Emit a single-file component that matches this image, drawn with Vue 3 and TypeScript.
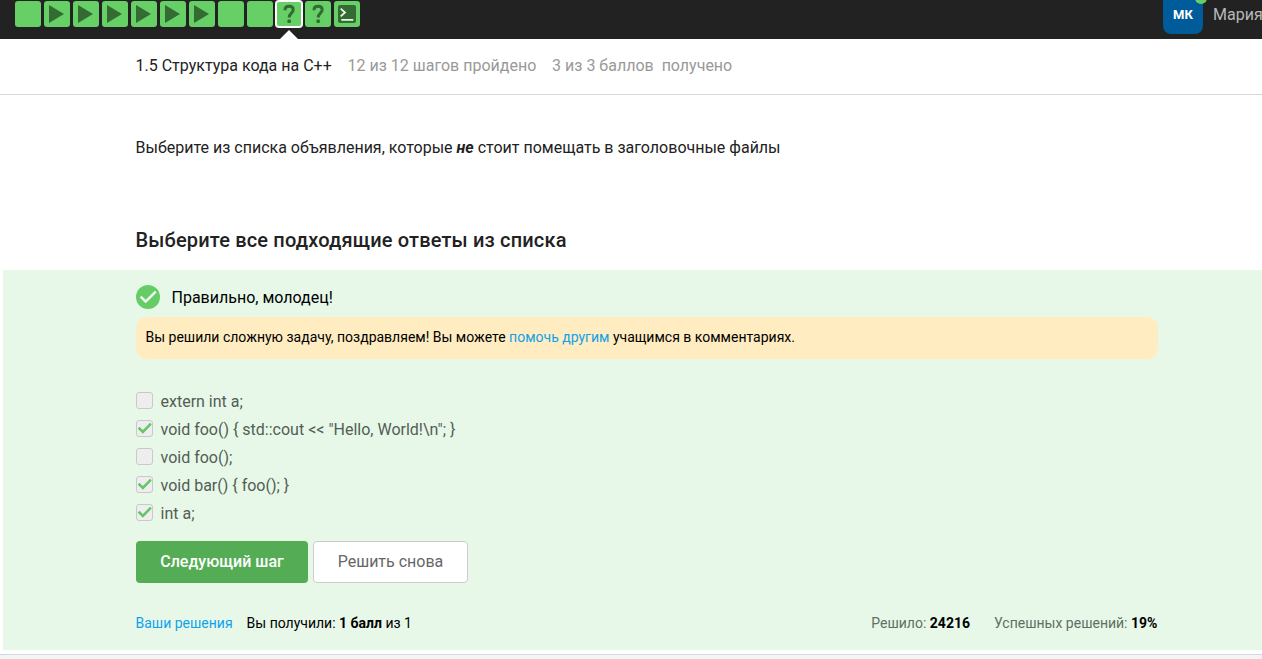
<script setup lang="ts">
type StepKind = 'text' | 'video' | 'quiz' | 'code'

interface Step {
  kind: StepKind
  active?: boolean
}

interface Choice {
  label: string
  checked: boolean
}

const steps: Step[] = [
  { kind: 'text' },
  { kind: 'video' },
  { kind: 'video' },
  { kind: 'video' },
  { kind: 'video' },
  { kind: 'video' },
  { kind: 'video' },
  { kind: 'text' },
  { kind: 'text' },
  { kind: 'quiz', active: true },
  { kind: 'quiz' },
  { kind: 'code' },
]

const choices: Choice[] = [
  { label: 'extern int a;', checked: false },
  { label: 'void foo() { std::cout << "Hello, World!\\n"; }', checked: true },
  { label: 'void foo();', checked: false },
  { label: 'void bar() { foo(); }', checked: true },
  { label: 'int a;', checked: true },
]
</script>

<template>
  <div class="page">
    <header class="topbar">
      <nav class="steps">
        <div v-for="(step, i) in steps" :key="i" class="step" :class="{ active: step.active }">
          <svg v-if="step.kind === 'video'" viewBox="0 0 26 26" width="26" height="26">
            <path d="M5 4v18l15-9z" fill="#336b33" />
          </svg>
          <svg v-else-if="step.kind === 'quiz'" viewBox="0 0 26 26" width="26" height="26">
            <path d="M9 9.2C9 6.6 10.6 5.3 13.1 5.3c2.6 0 4.1 1.4 4.1 3.5 0 3.2-4 3.5-4 7.6" fill="none" stroke="#336b33" stroke-width="3" />
            <circle cx="13.2" cy="20.2" r="1.9" fill="#336b33" />
          </svg>
          <svg v-else-if="step.kind === 'code'" viewBox="0 0 26 26" width="26" height="26">
            <rect x="4" y="4" width="18" height="18" rx="2" fill="#336b33" />
            <path d="M6.7 7.6l4.3 3.9-4.3 3.9M7.3 18.8h12" fill="none" stroke="#e8f7e8" stroke-width="1.8" />
          </svg>
        </div>
      </nav>
      <div class="user">
        <div class="avatar">МК<span class="status"></span></div>
        <span class="name">Мария</span>
      </div>
    </header>

    <div class="lesson">
      <span class="title">1.5 Структура кода на C++</span>
      <span class="progress">12 из 12 шагов пройдено</span>
      <span class="progress">3 из 3 баллов&nbsp; получено</span>
    </div>

    <main>
      <p class="question">Выберите из списка объявления, которые <b><i>не</i></b> стоит помещать в заголовочные файлы</p>
      <h2>Выберите все подходящие ответы из списка</h2>
      <section class="attempt">
        <div class="result">
          <svg viewBox="0 0 24 24" width="24" height="24">
            <circle cx="12" cy="12" r="12" fill="#66cc66" />
            <path d="M4.7 11.7l5 4.9L19.7 6.7" fill="none" stroke="#f1fbf1" stroke-width="2.5" />
          </svg>
          <span>Правильно, молодец!</span>
        </div>
        <div class="hint">Вы решили сложную задачу, поздравляем! Вы можете <a>помочь другим</a> учащимся в комментариях.</div>
        <ul class="choices">
          <li v-for="choice in choices" :key="choice.label">
            <span class="box">
              <svg v-if="choice.checked" viewBox="0 0 15 15" width="15" height="15">
                <path d="M1.6 6.8l4.3 4.1 8-8.2" fill="none" stroke="#66c566" stroke-width="2.6" />
              </svg>
            </span>
            <span class="label">{{ choice.label }}</span>
          </li>
        </ul>
        <div class="actions">
          <button class="next">Следующий шаг</button>
          <button class="again">Решить снова</button>
        </div>
        <div class="stats">
          <a>Ваши решения</a>
          <span class="score">Вы получили: <b>1 балл</b> из 1</span>
          <span class="solved">Решило: <b>24216</b></span>
          <span class="rate">Успешных решений: <b>19%</b></span>
        </div>
      </section>
    </main>
    <footer></footer>
  </div>
</template>

<style>
body {
  margin: 0;
  overflow: hidden;
}
</style>

<style scoped>
.page {
  height: 659px;
  overflow: hidden;
  display: flex;
  flex-direction: column;
  box-sizing: border-box;
  background: #fff;
  color: #222;
  font: 16px/24px Roboto, sans-serif;
}
.topbar {
  height: 39px;
  flex: none;
  display: flex;
  justify-content: space-between;
  background: #222;
}
.steps {
  display: flex;
  gap: 3px;
  padding: 1px 0 0 15px;
}
.step {
  position: relative;
  width: 26px;
  height: 26px;
  border-radius: 3px;
  background: #66cf66;
}
.step svg,
.result svg,
.box svg {
  display: block;
}
.step.active {
  box-shadow: 0 0 0 1px #fff, inset 0 0 0 1px #fff;
}
.step.active::after {
  content: '';
  position: absolute;
  left: 4px;
  top: 29px;
  border: 9px solid transparent;
  border-top: 0;
  border-bottom-color: #fff;
}
.user {
  display: flex;
  width: 99px;
}
.avatar {
  position: relative;
  flex: none;
  width: 40px;
  height: 34px;
  border-radius: 0 0 8px 8px;
  background: #005b9a;
  color: #fff;
  font-size: 13px;
  font-weight: 700;
  line-height: 29px;
  text-align: center;
}
.status {
  position: absolute;
  right: -4px;
  top: -8px;
  width: 12px;
  height: 12px;
  border-radius: 50%;
  background: #66cc66;
}
.name {
  margin-left: 10px;
  line-height: 29px;
  color: #b8b8b8;
}
.lesson {
  flex: none;
  display: flex;
  gap: 15.8px;
  height: 55px;
  padding-left: 135.5px;
  border-bottom: 1px solid #d9d9d9;
  line-height: 53px;
}
.progress {
  color: #999;
}
main {
  flex: none;
}
.question {
  margin: 41px 0 0 135.5px;
}
h2 {
  margin: 66px 0 15px 135.5px;
  font-size: 20px;
  line-height: 29px;
  font-weight: 500;
  letter-spacing: 0.16px;
}
.attempt {
  box-sizing: border-box;
  height: 380px;
  margin-left: 3px;
  padding: 15px 104px 0 133px;
  background: #e7f8e9;
}
.result {
  display: flex;
  gap: 11.5px;
  color: #000;
}
.result span {
  line-height: 26px;
  height: 24px;
}
.hint {
  height: 42px;
  margin-top: 8px;
  padding-left: 9.5px;
  border-radius: 10px;
  background: #ffecc0;
  color: #000;
  font-size: 14px;
  line-height: 41px;
}
a {
  color: #0fa2ea;
}
.choices {
  margin: 28px 0 0;
  padding: 0;
  list-style: none;
}
.choices li {
  display: flex;
  align-items: center;
  gap: 7.5px;
  height: 28px;
  color: #535d54;
}
.label {
  line-height: 26px;
  padding-top: 2px;
}
.box {
  box-sizing: border-box;
  width: 17px;
  height: 17px;
  margin-top: -1px;
  border: 1px solid #c9c9c9;
  border-radius: 3px;
  background: #eee;
}
.actions {
  display: flex;
  gap: 5px;
  margin-top: 14px;
}
button {
  box-sizing: border-box;
  height: 42px;
  padding: 0;
  border: 0;
  border-radius: 4px;
  font: 16px/40px Roboto, sans-serif;
}
.next {
  width: 172px;
  background: #54ad54;
  color: #fff;
  font-weight: 500;
}
.again {
  width: 155px;
  border: 1px solid #ccc;
  background: #fff;
  color: #666;
}
.stats {
  display: flex;
  margin: 28px 0.6px 0 -0.5px;
  font-size: 14px;
}
.stats b {
  color: #000;
  font-weight: 700;
}
.score {
  margin-left: 14px;
  color: #000;
}
.solved {
  margin-left: auto;
  color: #5f6f61;
}
.rate {
  margin-left: 24px;
  color: #5f6f61;
}
footer {
  flex: 1;
  margin-top: 4px;
  border-top: 1px solid #d5d8d8;
  background: #f3f4f4;
}
</style>
